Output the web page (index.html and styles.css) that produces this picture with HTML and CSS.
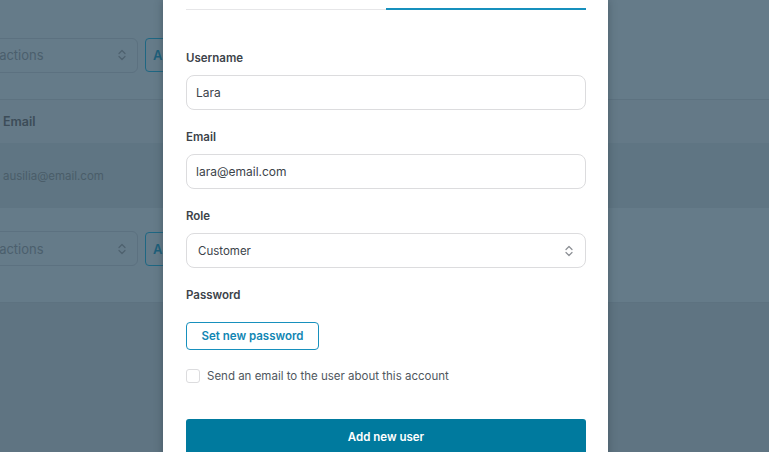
FILE: index.html
```html
<!DOCTYPE html>
<html lang="en">
<head>
<meta charset="utf-8">
<title>Add new user</title>
<link rel="stylesheet" href="styles.css">
</head>
<body>
<div class="page">
  <div class="toolbar">
    <div class="bulk-select">
      <span>Bulk actions</span>
      <svg class="chev" width="8" height="12" viewBox="0 0 8 12"><path d="M1 4.5 4 1.5 7 4.5M1 7.5 4 10.5 7 7.5" fill="none" stroke="currentColor" stroke-width="1.2" stroke-linecap="round" stroke-linejoin="round"/></svg>
    </div>
    <button class="apply">Apply</button>
  </div>
  <div class="table-head"><span class="cell">Email</span></div>
  <div class="table-row"><span class="cell">ausilia@email.com</span></div>
  <div class="toolbar bottom">
    <div class="bulk-select">
      <span>Bulk actions</span>
      <svg class="chev" width="8" height="12" viewBox="0 0 8 12"><path d="M1 4.5 4 1.5 7 4.5M1 7.5 4 10.5 7 7.5" fill="none" stroke="currentColor" stroke-width="1.2" stroke-linecap="round" stroke-linejoin="round"/></svg>
    </div>
    <button class="apply">Apply</button>
  </div>
</div>

<div class="modal">
  <div class="tabs">
    <div class="tab"></div>
    <div class="tab active"></div>
  </div>
  <form class="form">
    <div class="field">
      <label class="label">Username</label>
      <div class="input">Lara</div>
    </div>
    <div class="field">
      <label class="label">Email</label>
      <div class="input">lara@email.com</div>
    </div>
    <div class="field">
      <label class="label">Role</label>
      <div class="input select">
        <span>Customer</span>
        <svg width="8" height="12" viewBox="0 0 8 12"><path d="M1 4.5 4 1.5 7 4.5M1 7.5 4 10.5 7 7.5" fill="none" stroke="#8c8f94" stroke-width="1.2" stroke-linecap="round" stroke-linejoin="round"/></svg>
      </div>
    </div>
    <div class="field">
      <label class="label">Password</label>
    </div>
    <button type="button" class="btn-outline">Set new password</button>
    <label class="check">
      <span class="box"></span>
      <span>Send an email to the user about this account</span>
    </label>
    <button type="button" class="btn-primary">Add new user</button>
  </form>
</div>
</body>
</html>
```

FILE: styles.css
```css
* { box-sizing: border-box; }
html, body {
  margin: 0;
  height: 100%;
  overflow: hidden;
}
body {
  background: #5f7482;
  font-family: Inter, "Noto Sans", "Liberation Sans", sans-serif;
  position: relative;
}
.page {
  margin-left: -44px;
}
.toolbar {
  height: 100px;
  background: #657b89;
  border-bottom: 1px solid #5d7280;
  display: flex;
  align-items: center;
  gap: 7px;
  padding-top: 11px;
}
.toolbar.bottom {
  height: 95px;
  padding-top: 0;
  padding-bottom: 13px;
}
.bulk-select {
  width: 182px;
  height: 35px;
  border: 1px solid #5c7180;
  border-radius: 6px;
  display: flex;
  align-items: center;
  justify-content: space-between;
  padding: 0 11px 0 12px;
  color: #4b5f6d;
  font-size: 13px;
}
.bulk-select .chev { color: #4e616e; }
.apply {
  height: 34px;
  width: 70px;
  border: 1px solid #1e6783;
  border-radius: 4px;
  background: transparent;
  color: #1d5f7a;
  font: 600 13px Inter, sans-serif;
  text-align: left;
  padding-left: 7px;
}
.table-head {
  height: 43px;
  background: #647987;
  display: flex;
  align-items: center;
  font-size: 12.5px;
  font-weight: 600;
  color: #3c4c58;
}
.table-row {
  height: 65px;
  background: #5f7583;
  display: flex;
  align-items: center;
  font-size: 11.5px;
  color: #4a5d69;
}
.cell { padding-left: 47px; }

.modal {
  position: absolute;
  left: 163px;
  top: 0;
  width: 445px;
  height: 470px;
  background: #fff;
  padding: 0 22px 0 23px;
  box-shadow: 0 0 8px rgba(40, 55, 65, 0.45);
}
.tabs {
  display: flex;
}
.tab {
  flex: 1;
  height: 10px;
  border-bottom: 1px solid #e6e6e8;
}
.tab.active {
  border-bottom: 2px solid #1790bd;
}
.form {
  display: flex;
  flex-direction: column;
  padding-top: 39px;
}
.field {
  display: flex;
  flex-direction: column;
  gap: 8px;
  margin-bottom: 18px;
}
.label {
  font-size: 11.5px;
  line-height: 18px;
  font-weight: 600;
  color: #3c434a;
}
.input {
  height: 35px;
  flex: none;
  border: 1px solid #dcdcde;
  border-radius: 8px;
  display: flex;
  align-items: center;
  padding: 0 10px 0 9px;
  font-size: 12px;
  color: #3c434a;
}
.input.select {
  justify-content: space-between;
  padding-left: 11px;
  padding-right: 12px;
  font-size: 11.5px;
}
.btn-outline {
  align-self: flex-start;
  height: 28px;
  width: 133px;
  border: 1px solid #1790bd;
  border-radius: 4px;
  background: #fff;
  color: #1186b3;
  font: 600 11.5px Inter, sans-serif;
  padding: 0;
}
.check {
  display: flex;
  align-items: center;
  gap: 7px;
  margin-top: 19px;
  font-size: 11.5px;
  color: #50575e;
  height: 14px;
}
.box {
  width: 14px;
  height: 14px;
  border: 1px solid #dcdcde;
  border-radius: 3px;
}
.btn-primary {
  margin-top: 36px;
  height: 36px;
  border: none;
  border-radius: 3px;
  background: #007a9e;
  color: #fff;
  font: 600 11.5px Inter, sans-serif;
}
```
